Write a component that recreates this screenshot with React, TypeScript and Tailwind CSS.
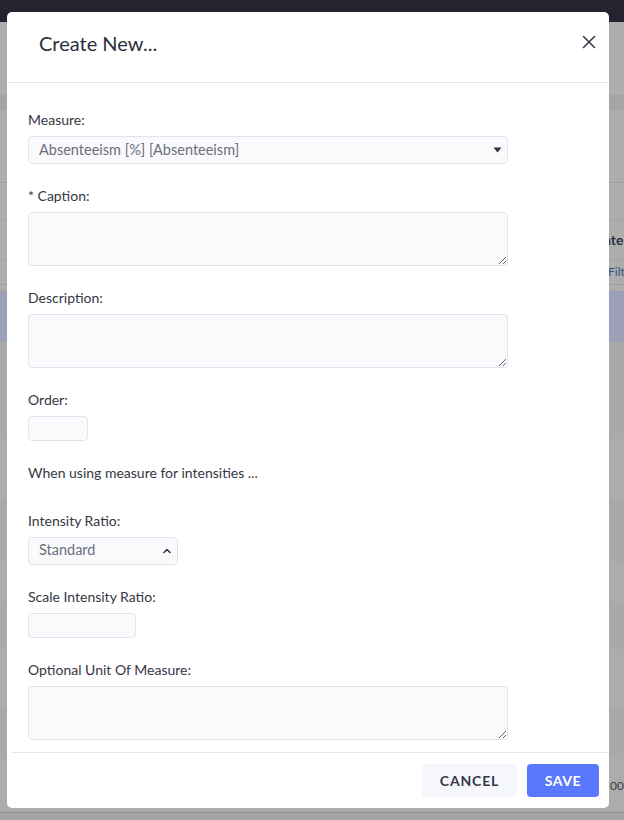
import React from 'react';

const font = { fontFamily: 'Lato, "Open Sans", "Liberation Sans", sans-serif' };

// Dimmed page behind the modal
const Backdrop: React.FC = () => (
  <div className="flex flex-col w-full h-full">
    <div className="h-[22px] bg-[#23242f] shrink-0" />
    <div className="h-[73px] bg-[#adadad] shrink-0" />
    <div className="h-[15px] bg-[#a5a5a6] shrink-0" />
    <div className="h-[73px] bg-[#adadad] shrink-0 border-b border-[#9f9f9f]" />
    <div className="h-[37px] bg-[#adadad] shrink-0 border-b border-[#a2a2a2]" />
    <div className="h-[40px] bg-[#adadad] shrink-0 border-b border-[#a2a2a2] flex items-center pl-[599px] text-[14px] font-bold text-[#2e303a] whitespace-nowrap">
      Inte
    </div>
    <div className="h-[25px] bg-[#adadad] shrink-0 border-b border-[#9f9f9f] flex items-center pl-[608px] text-[12px] text-[#33507e] whitespace-nowrap">
      Filt
    </div>
    <div className="h-[6px] bg-[#adadad] shrink-0" />
    <div className="h-[51px] bg-[#9ba0b8] shrink-0" />
    <div className="h-[97px] bg-[#a9a9a9] shrink-0" />
    <div className="h-[60px] bg-[#acacac] shrink-0" />
    <div className="h-[63px] bg-[#a9a9a9] shrink-0" />
    <div className="h-[40px] bg-[#acacac] shrink-0" />
    <div className="h-[47px] bg-[#a9a9a9] shrink-0" />
    <div className="h-[60px] bg-[#acacac] shrink-0" />
    <div className="h-[50px] bg-[#a9a9a9] shrink-0" />
    <div className="h-[53px] bg-[#acacac] shrink-0 flex items-center pl-[610px] text-[12px] text-[#3a3b44] whitespace-nowrap">
      00
    </div>
    <div className="flex-1 bg-[#a4a4a4] border-t border-[#8f8f8f]" />
  </div>
);

const Label: React.FC<{ children: React.ReactNode; className?: string }> = ({ children, className = '' }) => (
  <div className={`text-[14px] leading-[20px] text-[#353744] ${className}`}>{children}</div>
);

const boxCls = 'bg-[#fafafd] border border-[#e1e4ef] rounded-[4px]';

export default function App() {
  return (
    <div className="relative w-[624px] h-[820px] overflow-hidden" style={font}>
      <Backdrop />

      {/* Modal dialog */}
      <div className="absolute left-[7px] top-[12px] w-[602px] h-[796px] bg-white rounded-[5px] flex flex-col">
        {/* Header */}
        <div className="h-[71px] shrink-0 flex items-start justify-between border-b border-[#e0e7ef] ml-[1px]">
          <h2 className="mt-[17px] ml-[31px] text-[20px] leading-[28px] text-[#2d2f3d]">Create New...</h2>
          <button className="mt-[22px] mr-[12px] w-[16px] h-[16px] flex items-center justify-center">
            <svg width="14" height="14" viewBox="0 0 14 14" fill="none" stroke="#3a3c4a" strokeWidth="1.6" strokeLinecap="round">
              <path d="M1.5 1.5L12.5 12.5M12.5 1.5L1.5 12.5" />
            </svg>
          </button>
        </div>

        {/* Body */}
        <div className="flex-1 pl-[21px] pt-[27px] flex flex-col">
          <Label>Measure:</Label>
          <div className={`mt-[6px] w-[480px] h-[28px] ${boxCls} flex items-center justify-between pl-[10px] pr-[5px]`}>
            <span className="text-[14.5px] text-[#6b6e7b]">Absenteeism [%] [Absenteeism]</span>
            <svg width="9" height="6" viewBox="0 0 9 6">
              <path d="M0.5 0.5H8.5L4.5 5.5Z" fill="#2f3140" />
            </svg>
          </div>

          <Label className="mt-[22px]">* Caption:</Label>
          <textarea className={`mt-[6px] w-[480px] h-[54px] ${boxCls} block outline-none`} />

          <Label className="mt-[22px]">Description:</Label>
          <textarea className={`mt-[6px] w-[480px] h-[54px] ${boxCls} block outline-none`} />

          <Label className="mt-[22px]">Order:</Label>
          <input className={`mt-[6px] w-[60px] h-[25px] ${boxCls} outline-none`} />

          <Label className="mt-[22px]">When using measure for intensities ...</Label>

          <Label className="mt-[28px]">Intensity Ratio:</Label>
          <div className={`mt-[6px] w-[150px] h-[28px] ${boxCls} flex items-center justify-between pl-[10px] pr-[6px]`}>
            <span className="text-[14.5px] leading-[20px] -mt-[2px] text-[#6b6e7b]">Standard</span>
            <svg width="8" height="6" viewBox="0 0 8 6" fill="none" stroke="#2f3140" strokeWidth="1.5" strokeLinecap="round" strokeLinejoin="round">
              <path d="M1 4.5L4 1.5L7 4.5" />
            </svg>
          </div>

          <Label className="mt-[22px]">Scale Intensity Ratio:</Label>
          <input className={`mt-[6px] w-[108px] h-[25px] ${boxCls} outline-none`} />

          <Label className="mt-[22px]">Optional Unit Of Measure:</Label>
          <textarea className={`mt-[6px] w-[480px] h-[54px] ${boxCls} block outline-none`} />
        </div>

        {/* Footer */}
        <div className="ml-[5px] border-t border-[#e0e7ef] pt-[11px] pb-[11px] pr-[10px] flex justify-end gap-[10px]">
          <button className="w-[95px] h-[33px] rounded-[4px] bg-[#f6f7fc] text-[14px] font-bold tracking-[0.06em] text-[#363848]">
            CANCEL
          </button>
          <button className="w-[72px] h-[33px] rounded-[4px] bg-[#5a78fd] text-[14px] font-bold tracking-[0.04em] text-white">
            SAVE
          </button>
        </div>
      </div>
    </div>
  );
}
